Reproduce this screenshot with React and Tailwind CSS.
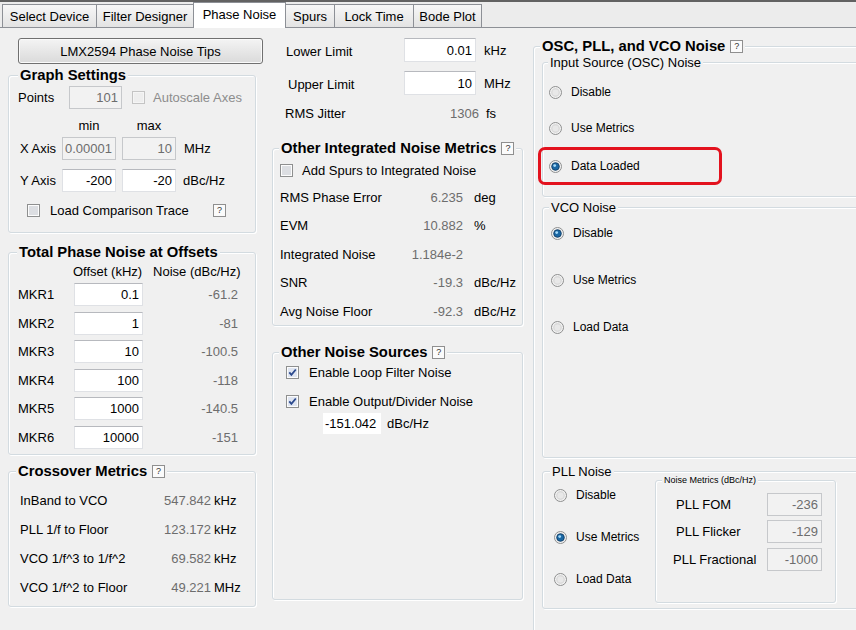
import React from 'react'

const tabs = [
  { label: 'Select Device', cls: 'w-[94px] h-[23px] mb-[1px] border-l border-t bg-gradient-to-b from-[#f7f7f7] to-[#e3e3e3]' },
  { label: 'Filter Designer', cls: 'w-[97px] h-[23px] mb-[1px] border-l border-t bg-gradient-to-b from-[#f7f7f7] to-[#e3e3e3]' },
  { label: 'Phase Noise', cls: 'w-[93px] h-[26px] pb-[2px] border-x border-t bg-white relative z-10' },
  { label: 'Spurs', cls: 'w-[48px] h-[23px] mb-[1px] border-t bg-gradient-to-b from-[#f7f7f7] to-[#e3e3e3]' },
  { label: 'Lock Time', cls: 'w-[79px] h-[23px] mb-[1px] border-l border-t bg-gradient-to-b from-[#f7f7f7] to-[#e3e3e3]' },
  { label: 'Bode Plot', cls: 'w-[69px] h-[23px] mb-[1px] border-x border-t bg-gradient-to-b from-[#f7f7f7] to-[#e3e3e3]' },
]

const markers = [
  { name: 'MKR1', offset: '0.1', noise: '-61.2', mt: 'mt-[4px]' },
  { name: 'MKR2', offset: '1', noise: '-81', mt: 'mt-[6px]' },
  { name: 'MKR3', offset: '10', noise: '-100.5', mt: 'mt-[5px]' },
  { name: 'MKR4', offset: '100', noise: '-118', mt: 'mt-[6px]' },
  { name: 'MKR5', offset: '1000', noise: '-140.5', mt: 'mt-[5px]' },
  { name: 'MKR6', offset: '10000', noise: '-151', mt: 'mt-[6px]' },
]

const crossover = [
  { label: 'InBand to VCO', value: '547.842', unit: 'kHz', mt: 'mt-[10px]' },
  { label: 'PLL 1/f to Floor', value: '123.172', unit: 'kHz', mt: 'mt-[9px]' },
  { label: 'VCO 1/f^3 to 1/f^2', value: '69.582', unit: 'kHz', mt: 'mt-[9px]' },
  { label: 'VCO 1/f^2 to Floor', value: '49.221', unit: 'MHz', mt: 'mt-[9px]' },
]

const integrated = [
  { label: 'RMS Phase Error', value: '6.235', unit: 'deg', mt: 'mt-[10px]' },
  { label: 'EVM', value: '10.882', unit: '%', mt: 'mt-[8px]' },
  { label: 'Integrated Noise', value: '1.184e-2', unit: '', mt: 'mt-[9px]' },
  { label: 'SNR', value: '-19.3', unit: 'dBc/Hz', mt: 'mt-[8px]' },
  { label: 'Avg Noise Floor', value: '-92.3', unit: 'dBc/Hz', mt: 'mt-[9px]' },
]

function Help() {
  return (
    <span className="inline-flex items-center justify-center w-[13px] h-[13px] border border-[#8f8f8f] bg-[#fbfbfb] text-[9px] leading-none font-normal text-[#333]">
      ?
    </span>
  )
}

function Check({ checked, disabled }) {
  return (
    <svg width="13" height="13" viewBox="0 0 13 13" className="shrink-0">
      <rect x="0.5" y="0.5" width="12" height="12" fill={disabled ? '#f5f5f5' : '#fcfcfc'} stroke={disabled ? '#c4c4c4' : '#8e8f8f'} />
      <rect x="2" y="2" width="9" height="9" fill={disabled ? '#eeeeee' : checked ? '#dfe5f1' : '#dcdee2'} />
      {checked && <path d="M3.3 6.4 L5.4 8.9 L9.8 3.5" fill="none" stroke="#2c4a8e" strokeWidth="1.8" />}
    </svg>
  )
}

function Radio({ checked }) {
  return (
    <svg width="13" height="13" viewBox="0 0 13 13" className="shrink-0">
      <circle cx="6.5" cy="6.5" r="6" fill="#f2f2f2" stroke="#8e8f8f" />
      <circle cx="6.5" cy="6.5" r="4.4" fill="#dadada" />
      <circle cx="6.5" cy="6.5" r="3" fill="#e8e8e8" />
      {checked && (
        <>
          <circle cx="6.5" cy="6.5" r="3.8" fill="#1a67a3" stroke="#0c3861" strokeWidth="0.8" />
          <circle cx="5.7" cy="5.6" r="1.4" fill="#a6dbfa" />
        </>
      )}
    </svg>
  )
}

function TextBox({ className, disabled, children }) {
  return (
    <div
      className={`flex items-center justify-end pr-[3px] border shrink-0 ${
        disabled
          ? 'bg-[#f2f2f2] border-[#c6c8cb] text-[#6d6d6d]'
          : 'bg-white border-[#dfe1e5] border-t-[#b7b9be] text-black'
      } ${className}`}
    >
      {children}
    </div>
  )
}

function Box({ title, bold, help, className, titleClass, children }) {
  return (
    <div className={`border border-[#d3dbe0] rounded-[3px] shadow-[inset_1px_1px_0_#ffffff,1px_1px_0_#ffffff] shrink-0 ${className}`}>
      <div className={`flex items-center gap-[5px] w-fit bg-[#f0f0f0] ${bold ? 'font-bold text-[14.8px]' : ''} ${titleClass}`}>
        <span>{title}</span>
        {help && <Help />}
      </div>
      {children}
    </div>
  )
}

function RadioRow({ label, checked, className }) {
  return (
    <div className={`h-[20px] flex items-center ${className}`}>
      <Radio checked={checked} />
      <span className="ml-[9px] text-[12px]">{label}</span>
    </div>
  )
}

export default function App() {
  return (
    <div className="w-[856px] h-[630px] overflow-hidden bg-[#f0f0f0] text-[13px] leading-none text-black font-['Liberation_Sans',Arial,sans-serif]">
      {/* tab strip */}
      <div className="h-[28px] flex items-end pl-[2px] border-t-2 border-[#626262] bg-[#ececec] shadow-[inset_0_-1px_0_#8d9096]">
        {tabs.map((t) => (
          <div key={t.label} className={`flex items-center justify-center border-[#8d9096] ${t.cls}`}>
            {t.label}
          </div>
        ))}
      </div>

      <div className="flex h-[602px]">
        {/* left column */}
        <div className="w-[270px] shrink-0 pl-[8px] flex flex-col">
          <button className="mt-[10px] ml-[10px] w-[245px] h-[26px] border border-[#707070] rounded-[3px] bg-gradient-to-b from-[#f4f4f4] to-[#dadada] shadow-[inset_0_0_0_1px_#fafafa] text-[13px]">
            LMX2594 Phase Noise Tips
          </button>

          <Box title="Graph Settings" bold className="mt-[11px] w-[248px] h-[158px]" titleClass="-mt-[10px] h-[18px] ml-[9px] px-[2px]">
            <div className="mt-[2px] h-[23px] flex items-center pl-[9px]">
              <span className="w-[51px]">Points</span>
              <TextBox disabled className="w-[53px] h-[23px]">101</TextBox>
              <span className="ml-[10px] flex"><Check disabled /></span>
              <span className="ml-[8px] text-[#8d8d8d]">Autoscale Axes</span>
            </div>
            <div className="mt-[8px] h-[16px] flex items-center pl-[53px]">
              <span className="w-[54px] text-center">min</span>
              <span className="ml-[6px] w-[54px] text-center">max</span>
            </div>
            <div className="mt-[4px] h-[23px] flex items-center pl-[11px]">
              <span className="w-[42px]">X Axis</span>
              <TextBox disabled className="w-[54px] h-[23px]">0.00001</TextBox>
              <TextBox disabled className="ml-[6px] w-[54px] h-[23px]">10</TextBox>
              <span className="ml-[8px]">MHz</span>
            </div>
            <div className="mt-[9px] h-[23px] flex items-center pl-[11px]">
              <span className="w-[42px]">Y Axis</span>
              <TextBox className="w-[54px] h-[23px]">-200</TextBox>
              <TextBox className="ml-[6px] w-[54px] h-[23px]">-20</TextBox>
              <span className="ml-[7px]">dBc/Hz</span>
            </div>
            <div className="mt-[11px] h-[14px] flex items-center pl-[18px]">
              <Check />
              <span className="ml-[10px] w-[163px]">Load Comparison Trace</span>
              <Help />
            </div>
          </Box>

          <Box title="Total Phase Noise at Offsets" bold className="mt-[19px] w-[248px] h-[203px]" titleClass="-mt-[10px] h-[18px] ml-[8px] px-[2px]">
            <div className="mt-[2px] h-[16px] flex items-center pl-[64px]">
              <span>Offset (kHz)</span>
              <span className="ml-[11px]">Noise (dBc/Hz)</span>
            </div>
            {markers.map((m) => (
              <div key={m.name} className={`h-[23px] flex items-center pl-[9px] ${m.mt}`}>
                <span className="w-[56px]">{m.name}</span>
                <TextBox className="w-[69px] h-[23px]">{m.offset}</TextBox>
                <span className="w-[95px] text-right text-[#6d6d6d]">{m.noise}</span>
              </div>
            ))}
          </Box>

          <Box title="Crossover Metrics" bold help className="mt-[16px] w-[248px] h-[136px]" titleClass="-mt-[10px] h-[18px] ml-[7px] px-[2px]">
            {crossover.map((c) => (
              <div key={c.label} className={`h-[20px] flex items-center pl-[11px] ${c.mt}`}>
                <span className="w-[131px]">{c.label}</span>
                <span className="w-[60px] text-right text-[#6d6d6d]">{c.value}</span>
                <span className="ml-[3px]">{c.unit}</span>
              </div>
            ))}
          </Box>
        </div>

        {/* middle column */}
        <div className="w-[262px] shrink-0 flex flex-col">
          <div className="mt-[10px] h-[24px] flex items-center pl-[16px]">
            <span className="w-[118px] pt-[3px]">Lower Limit</span>
            <TextBox className="w-[72px] h-[24px]">0.01</TextBox>
            <span className="ml-[8px]">kHz</span>
          </div>
          <div className="mt-[9px] h-[24px] flex items-center pl-[18px]">
            <span className="w-[116px] pt-[2px]">Upper Limit</span>
            <TextBox className="w-[72px] h-[24px]">10</TextBox>
            <span className="ml-[8px]">MHz</span>
          </div>
          <div className="mt-[8px] h-[20px] flex items-center pl-[15px]">
            <span className="w-[119px]">RMS Jitter</span>
            <span className="w-[75px] text-right text-[#6d6d6d]">1306</span>
            <span className="ml-[7px]">fs</span>
          </div>

          <Box title="Other Integrated Noise Metrics" bold help className="mt-[25px] ml-[2px] w-[251px] h-[178px]" titleClass="-mt-[10px] h-[18px] ml-[6px] px-[2px]">
            <div className="mt-[6px] h-[14px] flex items-center pl-[7px]">
              <Check />
              <span className="ml-[9px]">Add Spurs to Integrated Noise</span>
            </div>
            {integrated.map((r) => (
              <div key={r.label} className={`h-[20px] flex items-center pl-[7px] ${r.mt}`}>
                <span className="w-[128px]">{r.label}</span>
                <span className="w-[55px] text-right text-[#6d6d6d]">{r.value}</span>
                <span className="ml-[11px]">{r.unit}</span>
              </div>
            ))}
          </Box>

          <Box title="Other Noise Sources" bold help className="mt-[26px] ml-[2px] w-[251px] h-[248px]" titleClass="-mt-[10px] h-[18px] ml-[6px] px-[2px]">
            <div className="mt-[4px] h-[14px] flex items-center pl-[13px]">
              <Check checked />
              <span className="ml-[10px]">Enable Loop Filter Noise</span>
            </div>
            <div className="mt-[15px] h-[14px] flex items-center pl-[13px]">
              <Check checked />
              <span className="ml-[10px]">Enable Output/Divider Noise</span>
            </div>
            <div className="mt-[5px] h-[21px] flex items-center pl-[50px]">
              <div className="w-[58px] h-[21px] bg-white whitespace-nowrap pl-[2px] flex items-center">-151.042</div>
              <span className="ml-[6px]">dBc/Hz</span>
            </div>
          </Box>
        </div>

        {/* right column */}
        <div className="flex-1 overflow-hidden">
          <Box title="OSC, PLL, and VCO Noise" bold help className="mt-[18px] ml-[1px] w-[340px] h-[620px]" titleClass="-mt-[10px] h-[18px] ml-[6px] px-[2px]">
            <Box title="Input Source (OSC) Noise" className="mt-[7px] ml-[8px] w-[330px] h-[135px]" titleClass="-mt-[9px] h-[17px] ml-[5px] px-[2px]">
              <RadioRow label="Disable" className="mt-[11px] pl-[6px]" />
              <RadioRow label="Use Metrics" className="mt-[16px] pl-[6px]" />
              <div className="mt-[9px] -ml-[5px] w-[184px] h-[38px] border-[3px] border-[#e3121e] rounded-[7px] flex items-center pl-[8px]">
                <Radio checked />
                <span className="ml-[9px] text-[12px]">Data Loaded</span>
              </div>
            </Box>

            <Box title="VCO Noise" className="mt-[10px] ml-[8px] w-[330px] h-[251px]" titleClass="-mt-[9px] h-[17px] ml-[6px] px-[2px]">
              <RadioRow label="Disable" checked className="mt-[7px] pl-[8px]" />
              <RadioRow label="Use Metrics" className="mt-[27px] pl-[8px]" />
              <RadioRow label="Load Data" className="mt-[27px] pl-[8px]" />
            </Box>

            <Box title="PLL Noise" className="mt-[13px] ml-[8px] w-[330px] h-[138px]" titleClass="-mt-[9px] h-[17px] ml-[7px] px-[2px]">
              <div className="flex">
                <div className="w-[112px] flex flex-col pl-[11px]">
                  <RadioRow label="Disable" className="mt-[5px]" />
                  <RadioRow label="Use Metrics" checked className="mt-[22px]" />
                  <RadioRow label="Load Data" className="mt-[22px]" />
                </div>
                <Box title="Noise Metrics (dBc/Hz)" className="w-[181px] h-[123px]" titleClass="-mt-[6px] h-[11px] ml-[6px] px-[2px] text-[9px]">
                  <div className="mt-[7px] h-[23px] flex items-center">
                    <span className="w-[111px] pl-[20px]">PLL FOM</span>
                    <TextBox disabled className="w-[55px] h-[23px]">-236</TextBox>
                  </div>
                  <div className="mt-[4px] h-[23px] flex items-center">
                    <span className="w-[111px] pl-[20px]">PLL Flicker</span>
                    <TextBox disabled className="w-[55px] h-[23px]">-129</TextBox>
                  </div>
                  <div className="mt-[5px] h-[23px] flex items-center">
                    <span className="w-[111px] pl-[17px]">PLL Fractional</span>
                    <TextBox disabled className="w-[55px] h-[23px]">-1000</TextBox>
                  </div>
                </Box>
              </div>
            </Box>
          </Box>
        </div>
      </div>
    </div>
  )
}
